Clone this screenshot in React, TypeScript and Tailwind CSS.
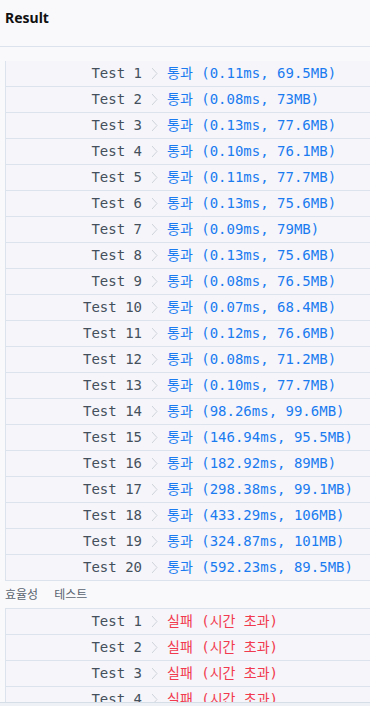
const mono = "font-['DejaVu_Sans_Mono','Noto_Sans_CJK_KR',monospace]";

const accuracy: string[] = [
  "(0.11ms, 69.5MB)",
  "(0.08ms, 73MB)",
  "(0.13ms, 77.6MB)",
  "(0.10ms, 76.1MB)",
  "(0.11ms, 77.7MB)",
  "(0.13ms, 75.6MB)",
  "(0.09ms, 79MB)",
  "(0.13ms, 75.6MB)",
  "(0.08ms, 76.5MB)",
  "(0.07ms, 68.4MB)",
  "(0.12ms, 76.6MB)",
  "(0.08ms, 71.2MB)",
  "(0.10ms, 77.7MB)",
  "(98.26ms, 99.6MB)",
  "(146.94ms, 95.5MB)",
  "(182.92ms, 89MB)",
  "(298.38ms, 99.1MB)",
  "(433.29ms, 106MB)",
  "(324.87ms, 101MB)",
  "(592.23ms, 89.5MB)",
];

function Chevron() {
  return (
    <svg width="7" height="13" viewBox="0 0 7 13" fill="none">
      <path d="M1 1l5 5.5-5 5.5" stroke="#cfd4da" strokeWidth="1" />
    </svg>
  );
}

function Row({ n, pass, detail }: { n: number; pass: boolean; detail: string }) {
  return (
    <div className={`flex h-[26px] items-center border-b border-[#dde3ec] pb-[1px] text-[14px] ${mono}`}>
      <div className="w-[136px] text-right text-[#44505c]">Test {n}</div>
      <div className="flex w-[25px] items-center justify-center">
        <Chevron />
      </div>
      {pass ? (
        <div className="whitespace-pre text-[#1a7bf0]">통과 {detail}</div>
      ) : (
        <div className="whitespace-pre text-[#f23a4e]">실패 {detail}</div>
      )}
    </div>
  );
}

export default function App() {
  return (
    <div className="flex h-[706px] w-[370px] flex-col overflow-hidden bg-[#f9f9fc] font-['Noto_Sans','Noto_Sans_CJK_KR',sans-serif]">
      <div className="h-[47px] shrink-0 border-b border-[#dde3ec] px-[5px] pt-[8px]">
        <h2 className="text-[14px] font-bold leading-[20px] text-[#111]">Result</h2>
      </div>
      <div className="min-h-0 flex-1 overflow-hidden pt-[14px]">
        <div className="ml-[5px] border-l border-[#dde3ec] bg-[#f5f5fa]">
          {accuracy.map((d, i) => (
            <Row key={i} n={i + 1} pass detail={d} />
          ))}
        </div>
        <div className="flex h-[27px] items-center gap-[16px] px-[5px] text-[12px] text-[#5a6470]">
          <span>효율성</span>
          <span>테스트</span>
        </div>
        <div className="ml-[5px] border-l border-t border-[#dde3ec] bg-[#f5f5fa]">
          {[1, 2, 3, 4].map((n) => (
            <Row key={n} n={n} pass={false} detail="(시간 초과)" />
          ))}
        </div>
      </div>
      <div className="h-[4px] shrink-0 border-t border-[#d5dde6] bg-[#eef1f5]" />
    </div>
  );
}
